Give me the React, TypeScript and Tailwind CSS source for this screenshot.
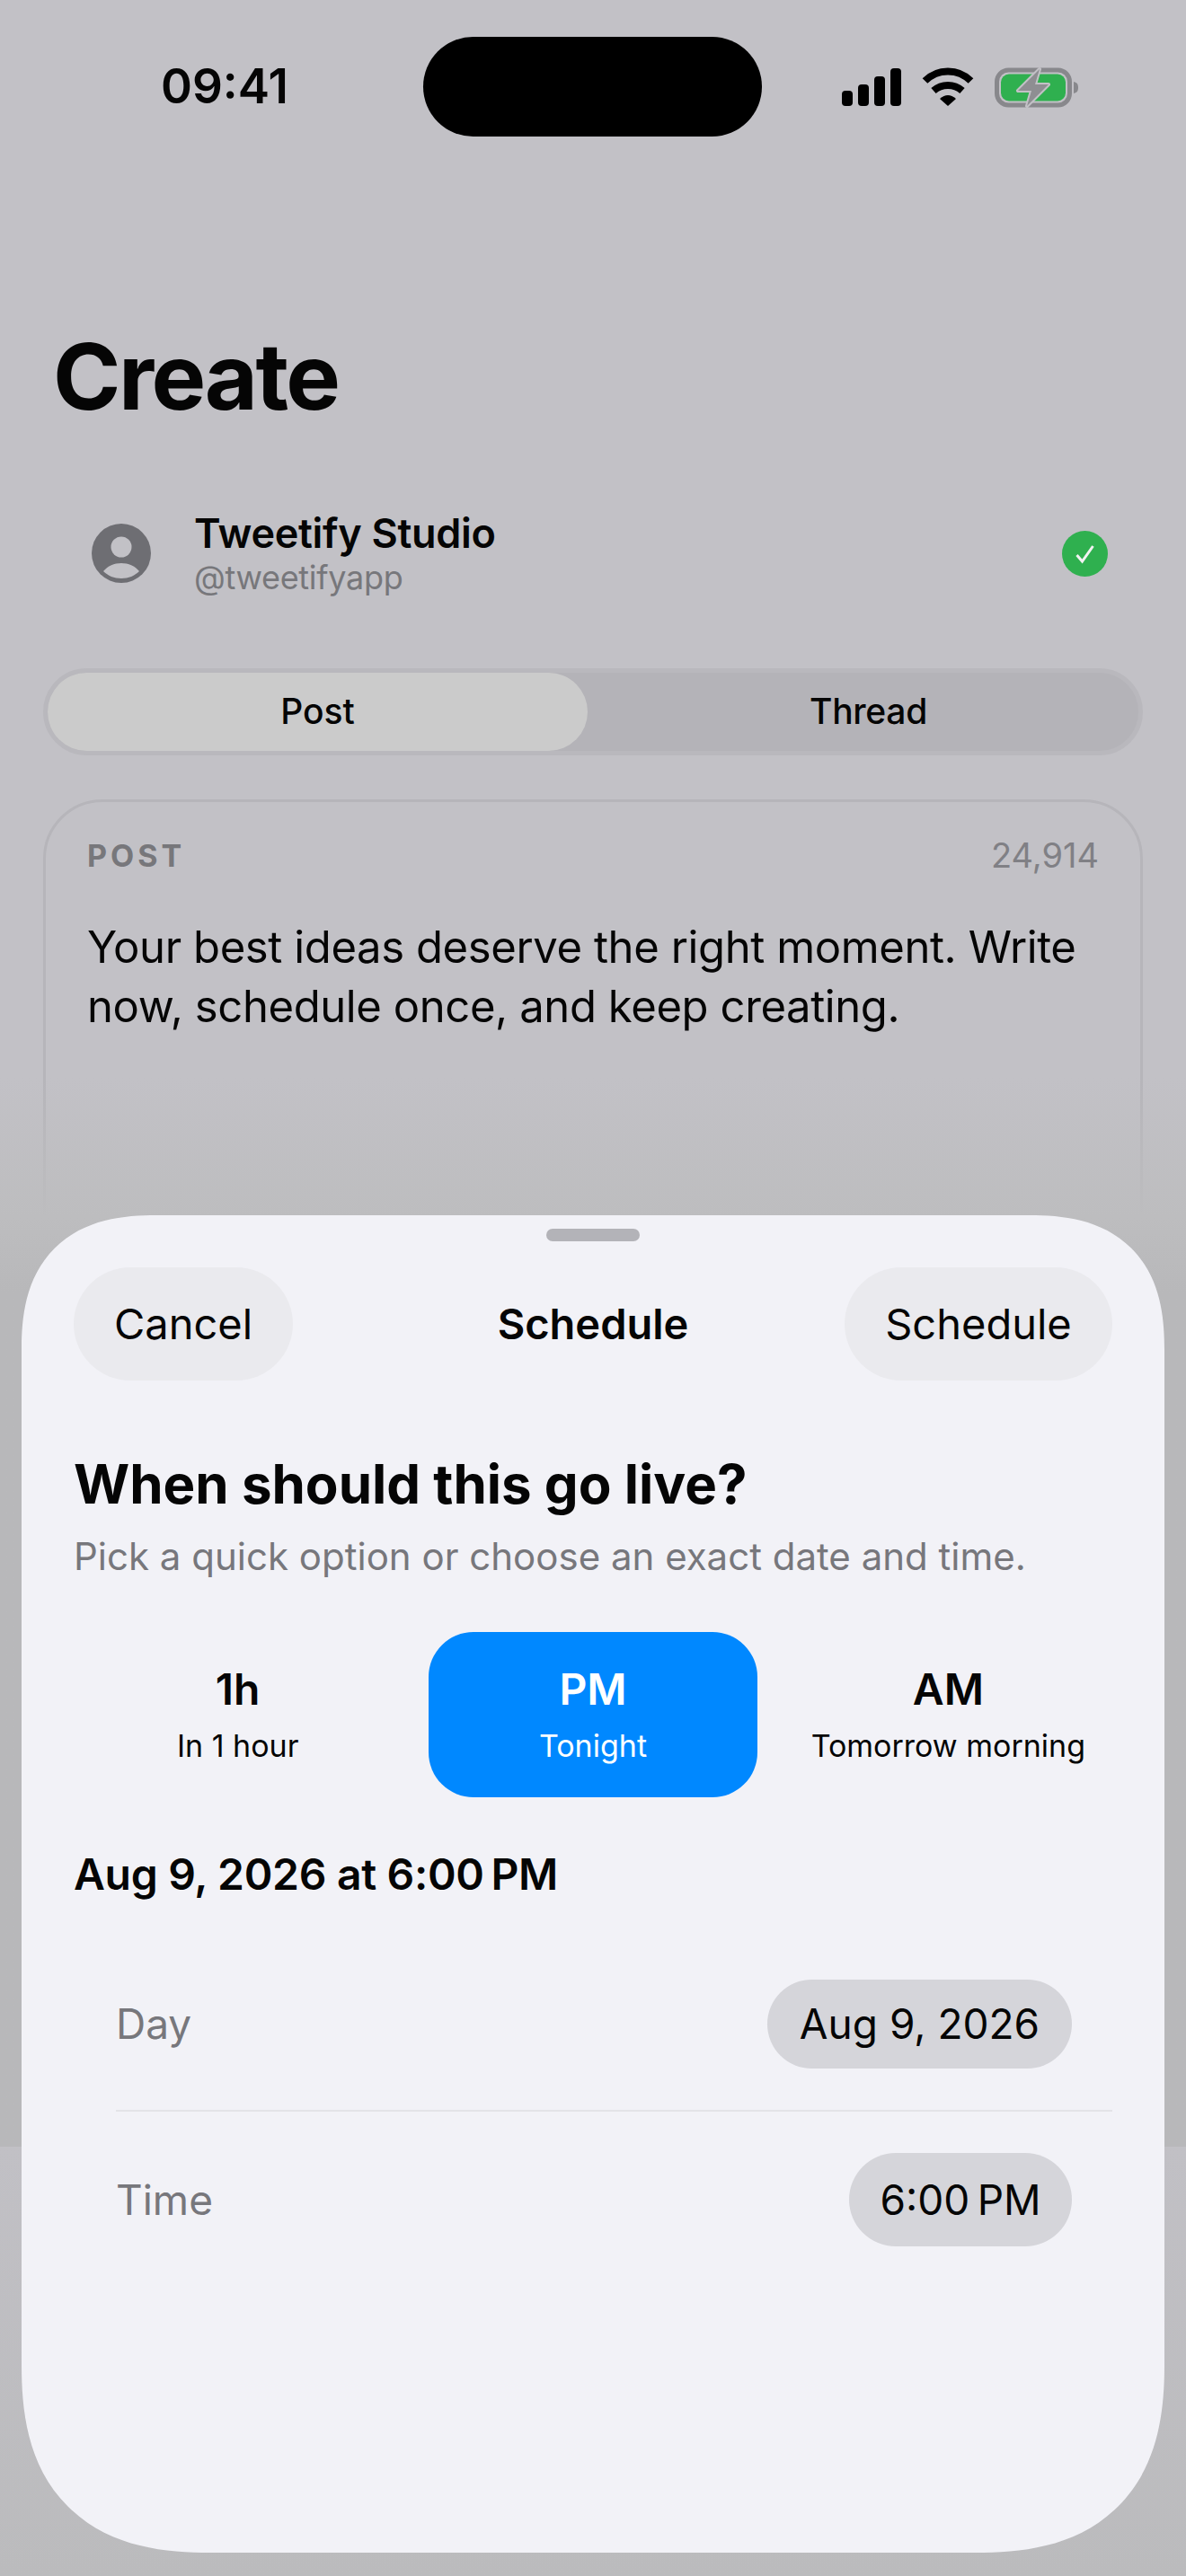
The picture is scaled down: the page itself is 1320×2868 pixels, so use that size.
/**
 * Create screen with the schedule sheet open
 */

const quickOptions = [
  { title: '1h', label: 'In 1 hour', active: false },
  { title: 'PM', label: 'Tonight', active: true },
  { title: 'AM', label: 'Tomorrow morning', active: false },
];

function SignalIcon() {
  return (
    <svg width="66" height="42" viewBox="0 0 66 42" fill="#000">
      <rect x="0" y="25" width="12" height="17" rx="4" />
      <rect x="18" y="18" width="12" height="24" rx="4" />
      <rect x="36" y="9" width="12" height="33" rx="4" />
      <rect x="54" y="0" width="12" height="42" rx="4" />
    </svg>
  );
}

function WifiIcon() {
  return (
    <svg width="58" height="43" viewBox="0 0 58 43" fill="none" stroke="#000" strokeWidth="8">
      <path d="M3.5 15A36 36 0 0 1 54.5 15" />
      <path d="M13 26A24 24 0 0 1 45 26" />
      <path d="M20 35Q29 27 38 35L29 43Z" fill="#000" stroke="none" />
    </svg>
  );
}

function BatteryIcon() {
  return (
    <svg width="94" height="46" viewBox="0 0 94 46">
      <rect x="2.5" y="4" width="81" height="39" rx="13" fill="none" stroke="#88888c" strokeWidth="5" />
      <rect x="7" y="8.500" width="72" height="30" rx="9" fill="#2fb04f" />
      <path d="M88 17C92 18 93 20 93 23.500C93 27 92 29 88 30Z" fill="#88888c" />
      <path
        d="M50 3L26 27H41L36 44L60 20H45Z"
        fill="#8e8e92"
        stroke="#c2c1c6"
        strokeWidth="4"
        strokeLinejoin="round"
        paintOrder="stroke"
      />
    </svg>
  );
}

function AvatarIcon() {
  return (
    <svg width="66" height="66" viewBox="0 0 66 66">
      <circle cx="33" cy="33" r="33" fill="#6e6e73" />
      <circle cx="33" cy="26" r="11.500" fill="#c2c1c6" />
      <path d="M13 53C18 47 25 44 33 44C41 44 48 47 53 53C48 58 41 61 33 61C25 61 18 58 13 53Z" fill="#c2c1c6" />
    </svg>
  );
}

function VerifiedIcon() {
  return (
    <svg width="51" height="51" viewBox="0 0 51 51" fill="none">
      <circle cx="25.500" cy="25.500" r="25.500" fill="#2fb04f" />
      <path d="M16.500 27L22.500 34L34.500 17" stroke="#f2f2f2" strokeWidth="3" />
    </svg>
  );
}

export default function App() {
  return (
    <div className="relative h-[2868px] w-[1320px] overflow-hidden bg-[#c2c1c6] font-['Inter',sans-serif] text-[#050505]">
      {/* Status bar */}
      <div className="grid grid-cols-[471px_377px_472px] pt-[41px]">
        <div className="flex h-[111px] items-center pl-[179px] text-[53px] font-semibold">09:41</div>
        <div className="h-[111px] rounded-full bg-black" />
        <div className="flex h-[111px] items-center gap-[23px] pl-[89px]">
          <SignalIcon />
          <WifiIcon />
          <BatteryIcon />
        </div>
      </div>

      {/* Page behind the sheet */}
      <div className="px-[48px]">
        <h1 className="mt-[216px] ml-[11px] text-[102px] leading-[102px] font-bold tracking-[-2.5px]">Create</h1>

        <div className="mt-[97px] flex items-center pr-[39px] pl-[54px]">
          <AvatarIcon />
          <div className="ml-[50px] flex-1">
            <div className="-ml-[2px] text-[45px] leading-[54px] font-semibold tracking-[-0.3px]">Tweetify Studio</div>
            <div className="-ml-[2px] text-[36px] leading-[44px] tracking-[-0.3px] text-[#77777b]">@tweetifyapp</div>
          </div>
          <VerifiedIcon />
        </div>

        <div className="mt-[79px] flex h-[97px] rounded-full border-[5px] border-[#b9b8bd] bg-[#b4b3b8]">
          <div className="flex w-[601px] items-center justify-center rounded-full bg-[#cbcbcb] text-[39px] font-medium">Post</div>
          <div className="flex flex-1 items-center justify-center pl-[12px] text-[39px] font-medium tracking-[-0.3px]">Thread</div>
        </div>

        <div className="mt-[49px] h-[800px] rounded-[66px] border-[3px] border-[#b6b5ba] px-[46px] pt-[31px]">
          <div className="flex items-center justify-between">
            <span className="text-[34px] font-bold tracking-[4px] text-[#77777b]">POST</span>
            <span className="text-[38px] text-[#808085]">24,914</span>
          </div>
          <p className="mt-[41px] text-[49px] leading-[66px] tracking-[-0.4px]">
            Your best ideas deserve the right moment. Write now, schedule once, and keep creating.
          </p>
        </div>
      </div>

      {/* Dimming behind the sheet */}
      <div className="absolute top-[1200px] left-0 h-[1190px] w-full bg-gradient-to-b from-[#bdbdbf00] via-[#bdbdbf] via-[13%] to-[#b8b8ba] to-[20%]" />
      <div className="absolute top-[2390px] left-0 h-[478px] w-full bg-gradient-to-b from-[#c1c0c5] to-[#bbbbbd]" />

      {/* Schedule sheet */}
      <div className="absolute top-[1353px] left-[24px] h-[1489px] w-[1272px] rounded-t-[150px] rounded-b-[210px] bg-[#f2f2f7] [corner-shape:superellipse(1.3)]">
        <div className="mx-auto mt-[15px] h-[14px] w-[104px] rounded-full bg-[#b3b3b8]" />

        <div className="mt-[29px] grid grid-cols-[1fr_auto_1fr] items-center px-[58px]">
          <div className="flex h-[126px] w-[244px] items-center justify-center rounded-full bg-[#eaeaee] text-[47px]">Cancel</div>
          <div className="text-[47px] font-semibold">Schedule</div>
          <div className="flex h-[126px] w-[298px] items-center justify-center justify-self-end rounded-full bg-[#eaeaee] text-[47px]">Schedule</div>
        </div>

        <h2 className="mt-[79px] ml-[58px] text-[60px] leading-[72px] font-bold">When should this go live?</h2>
        <p className="mt-[18px] ml-[58px] text-[42px] leading-[54px] text-[#77777c]">Pick a quick option or choose an exact date and time.</p>

        <div className="mt-[57px] grid grid-cols-3 gap-[30px] px-[58px]">
          {quickOptions.map((option) => (
            <div
              key={option.title}
              className={`flex h-[184px] flex-col items-center justify-center rounded-[50px] ${
                option.active ? 'bg-[#0088ff] text-white' : ''
              }`}
            >
              <div className="text-[48px] leading-[58px] font-semibold">{option.title}</div>
              <div className="mt-[12px] text-[34px] leading-[44px]">{option.label}</div>
            </div>
          ))}
        </div>

        <div className="mt-[57px] ml-[58px] text-[48px] leading-[58px] font-semibold tracking-[-0.3px]">Aug 9, 2026 at 6:00{'\u202F'}PM</div>

        <div className="mt-[88px] mr-[58px] ml-[105px]">
          <div className="flex items-center justify-between pr-[45px]">
            <span className="text-[46px] text-[#77777c]">Day</span>
            <span className="flex h-[99px] w-[339px] items-center justify-center rounded-full bg-[#d5d5da] text-[46px]">Aug 9, 2026</span>
          </div>
          <div className="mt-[46px] h-[2px] bg-[#e3e3e7]" />
          <div className="mt-[46px] flex items-center justify-between pr-[45px]">
            <span className="text-[46px] text-[#77777c]">Time</span>
            <span className="flex h-[104px] w-[248px] items-center justify-center rounded-full bg-[#d5d5da] text-[46px]">6:00{'\u202F'}PM</span>
          </div>
        </div>
      </div>
    </div>
  );
}
